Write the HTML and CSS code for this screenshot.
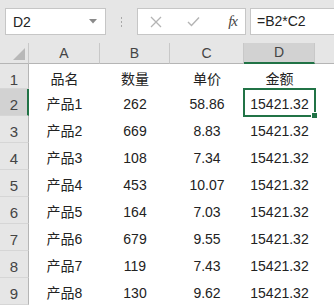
FILE: index.html
```html
<!DOCTYPE html>
<html>
<head>
<meta charset="utf-8">
<link rel="stylesheet" href="styles.css">
</head>
<body>
<div class="app">
  <div class="toolbar">
    <div class="namebox">
      <span class="ref">D2</span>
      <svg class="caret" width="8" height="5" viewBox="0 0 8 5"><path d="M0 0H8L4 4.5Z" fill="#8a8a8a"/></svg>
    </div>
    <div class="grip"><i></i><i></i><i></i></div>
    <div class="btnbox">
      <svg class="btn" width="12" height="12" viewBox="0 0 12 12"><path d="M1 1L11 11M11 1L1 11" stroke="#b4b4b4" stroke-width="1.3" fill="none"/></svg>
      <svg class="btn" width="13" height="11" viewBox="0 0 13 11"><path d="M1 6L4.5 9.5L12 1.5" stroke="#b4b4b4" stroke-width="1.4" fill="none"/></svg>
      <span class="fx">fx</span>
    </div>
    <div class="formula">=B2*C2</div>
  </div>
  <div class="sheet">
    <div class="corner"><svg width="12" height="12" viewBox="0 0 12 12"><path d="M12 0V12H0Z" fill="#b8b8b8"/></svg></div>
    <div class="ch">A</div><div class="ch">B</div><div class="ch">C</div><div class="ch ch-active">D</div><div class="ch ch-last"></div>

    <div class="rh">1</div><div class="c zh">品名</div><div class="c zh">数量</div><div class="c zh">单价</div><div class="c zh">金额</div><div class="c"></div>
    <div class="rh rh-active">2</div><div class="c zh">产品1</div><div class="c">262</div><div class="c">58.86</div><div class="c active">15421.32</div><div class="c"></div>
    <div class="rh">3</div><div class="c zh">产品2</div><div class="c">669</div><div class="c">8.83</div><div class="c">15421.32</div><div class="c"></div>
    <div class="rh">4</div><div class="c zh">产品3</div><div class="c">108</div><div class="c">7.34</div><div class="c">15421.32</div><div class="c"></div>
    <div class="rh">5</div><div class="c zh">产品4</div><div class="c">453</div><div class="c">10.07</div><div class="c">15421.32</div><div class="c"></div>
    <div class="rh">6</div><div class="c zh">产品5</div><div class="c">164</div><div class="c">7.03</div><div class="c">15421.32</div><div class="c"></div>
    <div class="rh">7</div><div class="c zh">产品6</div><div class="c">679</div><div class="c">9.55</div><div class="c">15421.32</div><div class="c"></div>
    <div class="rh">8</div><div class="c zh">产品7</div><div class="c">119</div><div class="c">7.43</div><div class="c">15421.32</div><div class="c"></div>
    <div class="rh">9</div><div class="c zh">产品8</div><div class="c">130</div><div class="c">9.62</div><div class="c">15421.32</div><div class="c"></div>
  </div>
</div>
</body>
</html>
```
FILE: styles.css
```css
html, body {
  margin: 0;
  padding: 0;
  background: #ffffff;
}
.app {
  width: 334px;
  height: 306px;
  overflow: hidden;
  font-family: "Liberation Sans", "Noto Sans CJK SC", sans-serif;
  color: #222;
}
.toolbar {
  height: 43px;
  background: #e6e6e6;
  display: flex;
  align-items: flex-start;
  padding-top: 8px;
  box-sizing: border-box;
}
.namebox {
  margin-left: 5px;
  width: 101px;
  height: 27px;
  box-sizing: border-box;
  background: #fff;
  border: 1px solid #c6c6c6;
  display: flex;
  align-items: center;
  justify-content: space-between;
  padding: 0 8px 0 7px;
}
.ref {
  font-size: 14px;
  color: #222;
}
.caret {
  display: block;
}
.grip {
  width: 31px;
  height: 27px;
  display: flex;
  flex-direction: column;
  align-items: center;
  justify-content: center;
  gap: 2px;
}
.grip i {
  width: 1px;
  height: 2px;
  background: #a8a8a8;
  display: block;
}
.btnbox {
  width: 109px;
  height: 27px;
  box-sizing: border-box;
  background: #fff;
  border: 1px solid #c6c6c6;
  display: flex;
  align-items: center;
  padding: 0 8px 0 12px;
  gap: 0;
}
.btnbox .btn {
  display: block;
}
.btnbox .btn:first-child {
  margin-right: 25px;
}
.fx {
  margin-left: auto;
  font-family: "Liberation Serif", serif;
  font-style: italic;
  font-size: 15px;
  color: #444;
  letter-spacing: -1px;
}
.formula {
  margin-left: 4px;
  flex: 1;
  height: 27px;
  box-sizing: border-box;
  background: #fff;
  border: 1px solid #c6c6c6;
  border-right: none;
  font-size: 14px;
  line-height: 25px;
  padding-left: 6px;
  color: #222;
}
.sheet {
  display: grid;
  grid-template-columns: 29px 71px 70px 74px 71px 1fr;
  grid-template-rows: 21px 25px repeat(8, 27px);
  background: #fff;
}
.corner {
  background: #e6e6e6;
  border-right: 1px solid #c8c8c8;
  border-bottom: 1px solid #b5b5b5;
  display: flex;
  align-items: flex-end;
  justify-content: flex-end;
  padding: 0 3px 3px 0;
  box-sizing: border-box;
}
.corner svg {
  display: block;
}
.ch {
  background: #e6e6e6;
  border-right: 1px solid #c8c8c8;
  border-bottom: 1px solid #b5b5b5;
  box-sizing: border-box;
  text-align: center;
  font-size: 14px;
  line-height: 20px;
  color: #444;
}
.ch-last {
  border-right: none;
}
.ch-active {
  background: #d2d2d2;
  border-bottom: 2px solid #217346;
  line-height: 19px;
}
.rh {
  background: #e6e6e6;
  border-right: 1px solid #b5b5b5;
  border-bottom: 1px solid #d6d6d6;
  box-sizing: border-box;
  text-align: center;
  font-size: 15px;
  color: #444;
  padding-top: 7px;
  line-height: 18px;
}
.rh-active {
  background: #d2d2d2;
  border-right: 2px solid #217346;
  padding-left: 1px;
}
.c {
  text-align: center;
  font-size: 14px;
  line-height: 18px;
  padding-top: 6px;
  box-sizing: border-box;
  color: #222;
  position: relative;
}
.zh {
  font-size: 14px;
}
.active {
  outline: 2px solid #217346;
  outline-offset: -1px;
}
.active::after {
  content: "";
  position: absolute;
  right: -3px;
  bottom: -3px;
  width: 5px;
  height: 5px;
  background: #217346;
  border: 1px solid #fff;
}
```
